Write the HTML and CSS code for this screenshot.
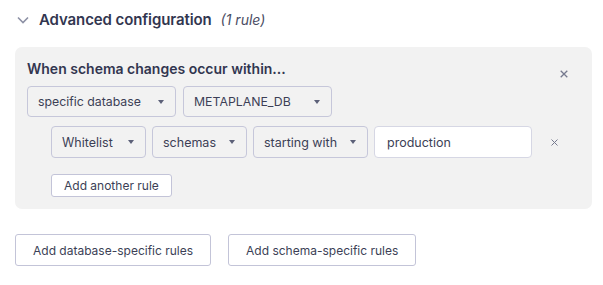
FILE: index.html
```html
<!doctype html>
<html>
  <head>
    <meta charset="utf-8" />
    <title>Advanced configuration</title>
    <link rel="stylesheet" href="styles.css">
  </head>

  <body>
    <div class="section-header">
      <svg class="chevron" width="12" height="8" viewBox="0 0 12 8">
        <path d="M1 1.5 L6 6.5 L11 1.5" fill="none" stroke="#8d91a5" stroke-width="1.6" />
      </svg>
      <h2>Advanced configuration</h2>
      <span class="count">(1 rule)</span>
    </div>

    <div class="panel">
      <div class="panel-head">
        <h3>When schema changes occur within...</h3>
        <button class="close" aria-label="Remove">
          <svg width="8" height="8" viewBox="0 0 8 8">
            <path d="M0.7 0.7 L7.3 7.3 M7.3 0.7 L0.7 7.3" stroke="#767a8f" stroke-width="1.3" />
          </svg>
        </button>
      </div>

      <div class="row row-scope">
        <div class="select scope">specific database<span class="caret"></span></div>
        <div class="select scope">METAPLANE_DB<span class="caret"></span></div>
      </div>

      <div class="rules">
        <div class="row">
          <div class="select w-sm">Whitelist<span class="caret"></span></div>
          <div class="select w-sm">schemas<span class="caret"></span></div>
          <div class="select w-md">starting with<span class="caret"></span></div>
          <input class="text-input" type="text" value="production" />
          <button class="close rule-close" aria-label="Remove rule">
            <svg width="7" height="7" viewBox="0 0 7 7">
              <path d="M0.5 0.5 L6.5 6.5 M6.5 0.5 L0.5 6.5" stroke="#767a8f" stroke-width="1" />
            </svg>
          </button>
        </div>
        <button class="btn btn-small">Add another rule</button>
      </div>
    </div>

    <div class="actions">
      <button class="btn btn-wide">Add database-specific rules</button>
      <button class="btn btn-wide">Add schema-specific rules</button>
    </div>
  </body>
</html>
```

FILE: styles.css
```css
body {
  margin: 0;
  padding: 0 11px 0 15px;
  font-family: Inter, "Noto Sans", Arial, sans-serif;
  color: #3c3f56;
  background: #fff;
}

.section-header {
  display: flex;
  align-items: center;
  height: 38px;
  padding-left: 2px;
}

.chevron {
  margin-right: 10px;
  margin-top: 1px;
}

.section-header h2 {
  margin: 0;
  font-size: 15px;
  font-weight: 600;
  letter-spacing: -0.1px;
  color: #323650;
}

.count {
  margin-left: 9px;
  font-size: 14px;
  font-style: italic;
  color: #4a4d63;
}

.panel {
  margin-top: 9px;
  background-color: #f2f2f2;
  border-radius: 7px;
  padding: 13px 12px 12px 12px;
}

.panel-head {
  display: flex;
  justify-content: space-between;
  align-items: flex-start;
}

.panel-head h3 {
  margin: 0;
  font-size: 14px;
  font-weight: 600;
  color: #323650;
}

.close {
  background: none;
  border: none;
  padding: 0;
  cursor: pointer;
  display: flex;
}

.panel-head .close {
  margin: 10px 12px 0 0;
}

.row {
  display: flex;
  align-items: center;
  gap: 6px;
  margin-top: 9px;
}

.row-scope {
  gap: 7px;
  margin-top: 8px;
}

.select {
  box-sizing: border-box;
  height: 32px;
  display: flex;
  align-items: center;
  justify-content: space-between;
  padding: 0 11px 0 10px;
  border: 1px solid #c6c7da;
  border-radius: 4px;
  font-size: 12.5px;
  color: #3c3f56;
}

.select.scope {
  width: 149px;
  height: 31px;
  font-size: 12.3px;
}

.w-sm {
  width: 95px;
}

.w-md {
  width: 115px;
}

.caret {
  width: 0;
  height: 0;
  border-left: 3px solid transparent;
  border-right: 3px solid transparent;
  border-top: 4px solid #5c6078;
}

.rules {
  padding-left: 24px;
}

.text-input {
  box-sizing: border-box;
  width: 158px;
  height: 32px;
  padding: 0 12px;
  border: 1px solid #d6d7e4;
  border-radius: 4px;
  background: #fff;
  font-family: inherit;
  font-size: 12.5px;
  color: #3c3f56;
}

.rule-close {
  margin-left: 13px;
}

.btn {
  box-sizing: border-box;
  background: #fff;
  border: 1px solid #c3c4d8;
  border-radius: 3px;
  font-family: inherit;
  font-size: 12px;
  color: #3c3f56;
  cursor: pointer;
}

.btn-small {
  margin-top: 16px;
  height: 23px;
  padding: 0 12px;
}

.actions {
  display: flex;
  gap: 17px;
  margin-top: 25px;
}

.btn-wide {
  height: 32px;
  padding: 0 17px;
}
```
